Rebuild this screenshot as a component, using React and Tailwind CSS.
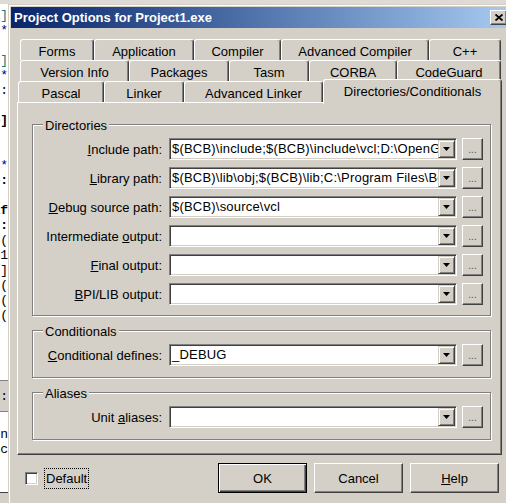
import React from 'react';

const rowOne = [
  { label: 'Forms', w: 'w-[74px]' },
  { label: 'Application', w: 'w-[100px]' },
  { label: 'Compiler', w: 'w-[87px]' },
  { label: 'Advanced Compiler', w: 'w-[148px]' },
  { label: 'C++', w: 'w-[72px]' },
];

const rowTwo = [
  { label: 'Version Info', w: 'w-[109px]' },
  { label: 'Packages', w: 'w-[100px]' },
  { label: 'Tasm', w: 'w-[80px]' },
  { label: 'CORBA', w: 'w-[88px]' },
  { label: 'CodeGuard', w: 'w-[104px]' },
];

const rowThree = [
  { label: 'Pascal', w: 'w-[86px]' },
  { label: 'Linker', w: 'w-[80px]' },
  { label: 'Advanced Linker', w: 'w-[139px]' },
];

// bits of the code editor that peek out from behind the dialog
const code = [
  ['1]', 'text-[#008080]'],
  ['*', 'text-[#000080]'],
  ['', ''],
  ['1]', 'text-[#008080]'],
  ['*', 'text-[#000080]'],
  ['L:', 'text-black'],
  ['', ''],
  ['o]', 'text-black font-bold'],
  ['', ''],
  ['', ''],
  ['*', 'text-[#000080]'],
  ['o:', 'text-black font-bold'],
  ['', ''],
  ['af', 'text-black font-bold'],
  ['e:', 'text-black font-bold'],
  ['L(', 'text-black'],
  ['o1', 'text-black'],
  ['o]', 'text-black'],
  ['L(', 'text-black'],
  ['L(', 'text-black'],
  ['L(', 'text-black'],
];

function Tab({ label, w }) {
  return (
    <div className={`${w} h-[21px] flex items-center justify-center pt-[2px] border-t border-l border-r border-t-white border-l-white border-r-[#404040] rounded-tl-[3px] rounded-tr-[3px] shadow-[inset_-1px_0_0_#808080] bg-[#d4d0c8]`}>
      {label}
    </div>
  );
}

function Arrow() {
  return (
    <svg width="7" height="4" viewBox="0 0 7 4">
      <path d="M0 0H7L3.5 4Z" fill="#000" />
    </svg>
  );
}

function Combo({ value }) {
  return (
    <div className="w-[288px] h-[22px] bg-white border border-t-[#808080] border-l-[#808080] border-b-white border-r-white shadow-[inset_1px_1px_0_#404040,inset_-1px_-1px_0_#d4d0c8] p-[1px] flex">
      <div className="flex-1 overflow-hidden whitespace-nowrap pl-[1px] leading-[18px] tracking-[0.2px]">{value}</div>
      <div className="w-[17px] h-full bg-[#d4d0c8] border border-t-[#d4d0c8] border-l-[#d4d0c8] border-r-[#404040] border-b-[#404040] shadow-[inset_1px_1px_0_#fff,inset_-1px_-1px_0_#808080] flex items-center justify-center">
        <Arrow />
      </div>
    </div>
  );
}

function Dots() {
  return (
    <div className="w-[21px] h-[22px] bg-[#d4d0c8] border border-t-white border-l-white border-r-[#404040] border-b-[#404040] shadow-[inset_-1px_-1px_0_#808080] flex items-end justify-center pb-[4px] text-[10px] leading-[10px] text-[#505050]">
      ...
    </div>
  );
}

function Row({ label, value }) {
  return (
    <div className="flex items-center h-[22px]">
      <div className="w-[129px] text-right whitespace-nowrap">{label}</div>
      <div className="ml-[7px]">
        <Combo value={value} />
      </div>
      <div className="ml-[5px]">
        <Dots />
      </div>
    </div>
  );
}

function Group({ title, children, className = '' }) {
  return (
    <div className={`relative border border-[#808080] shadow-[inset_1px_1px_0_#fff,1px_1px_0_#fff] pt-[13px] ${className}`}>
      <span className="absolute left-[10px] -top-[7px] px-[2px] bg-[#d4d0c8] leading-[15px]">{title}</span>
      {children}
    </div>
  );
}

function Button({ children, isDefault }) {
  const edge = isDefault
    ? 'border border-black shadow-[inset_1px_1px_0_#fff,inset_-1px_-1px_0_#404040,inset_-2px_-2px_0_#808080]'
    : 'border border-t-white border-l-white border-r-[#404040] border-b-[#404040] shadow-[inset_-1px_-1px_0_#808080]';
  return (
    <div className={`w-[89px] h-[30px] flex items-center justify-center bg-[#d4d0c8] ${edge}`}>
      {children}
    </div>
  );
}

export default function App() {
  return (
    <div className="w-[506px] h-[503px] overflow-hidden bg-[#d4d0c8] flex flex-col font-['Liberation_Sans',Arial,sans-serif] text-[13px] leading-[15px] text-black">
      <div className="h-[4px] shrink-0 bg-[#dedbd6]" />
      <div className="flex flex-1 min-h-0">
        {/* editor behind */}
        <div className="w-[8px] shrink-0 bg-white flex flex-col overflow-hidden font-['Liberation_Mono',monospace]">
          <div className="pt-[4px]">
            {code.map(([t, c], i) => (
              <div key={i} className={`h-[15px] flex justify-end whitespace-nowrap ${c}`}>
                {t}
              </div>
            ))}
          </div>
          <div className="h-[57px] shrink-0" />
          <div className="h-[32px] shrink-0 bg-[#d4d0c8] border-t border-b border-[#808080] flex items-center justify-end">:</div>
          <div className="h-[15px] mt-[15px] flex justify-end">n</div>
          <div className="h-[15px] flex justify-end">c</div>
          <div className="flex-1" />
          <div className="h-[11px] shrink-0 bg-[#d4d0c8] border-t border-[#404040]" />
        </div>

        {/* dialog */}
        <div className="w-[503px] h-[520px] shrink-0 bg-[#d4d0c8] border border-t-[#d4d0c8] border-l-[#d4d0c8] border-r-[#404040] border-b-[#404040] shadow-[inset_1px_1px_0_#fff,inset_-1px_-1px_0_#808080] p-[2px]">
          <div className="h-[21px] flex items-center bg-linear-to-r from-[#0a246a] to-[#a6caf0]">
            <span className="pl-[3px] text-white font-bold text-[13px]">Project Options for Project1.exe</span>
            <div className="ml-auto mr-[1px] w-[17px] h-[15px] bg-[#d4d0c8] border border-t-white border-l-white border-r-[#404040] border-b-[#404040] shadow-[inset_-1px_-1px_0_#808080] flex items-center justify-center">
              <svg width="8" height="7" viewBox="0 0 8 7">
                <path d="M0.5 0.5L7.5 6.5M7.5 0.5L0.5 6.5" stroke="#000" strokeWidth="1.8" />
              </svg>
            </div>
          </div>

          <div className="px-[6px] pt-[11px]">
            <div className="flex ml-[3px]">
              {rowOne.map((t) => (
                <Tab key={t.label} {...t} />
              ))}
            </div>
            <div className="flex ml-[3px]">
              {rowTwo.map((t) => (
                <Tab key={t.label} {...t} />
              ))}
            </div>
            <div className="flex items-end h-[21px] ml-[1px]">
              {rowThree.map((t) => (
                <Tab key={t.label} {...t} />
              ))}
              <div className="relative z-10 w-[179px] h-[25px] -mb-[2px] flex items-center justify-center pb-[2px] border-t border-l border-r border-t-white border-l-white border-r-[#404040] rounded-tl-[3px] rounded-tr-[3px] shadow-[inset_-1px_0_0_#808080] bg-[#d4d0c8]">
                Directories/Conditionals
              </div>
            </div>

            <div className="border-t border-l border-r border-b border-t-white border-l-white border-r-[#404040] border-b-[#404040] shadow-[inset_-1px_-1px_0_#808080] pl-[14px] pr-[10px] pt-[21px] pb-[14px]">
              <Group title="Directories" className="pb-[10px]">
                <div className="flex flex-col gap-[7px]">
                  <Row label={<><u>I</u>nclude path:</>} value="$(BCB)\include;$(BCB)\include\vcl;D:\OpenG" />
                  <Row label={<><u>L</u>ibrary path:</>} value="$(BCB)\lib\obj;$(BCB)\lib;C:\Program Files\Bor" />
                  <Row label={<><u>D</u>ebug source path:</>} value="$(BCB)\source\vcl" />
                  <Row label={<>Intermediate <u>o</u>utput:</>} value="" />
                  <Row label={<><u>F</u>inal output:</>} value="" />
                  <Row label={<><u>B</u>PI/LIB output:</>} value="" />
                </div>
              </Group>
              <Group title="Conditionals" className="mt-[14px] pb-[11px]">
                <Row label={<><u>C</u>onditional defines:</>} value="_DEBUG" />
              </Group>
              <Group title="Aliases" className="mt-[14px] pb-[11px]">
                <Row label={<>Unit <u>a</u>liases:</>} value="" />
              </Group>
            </div>

            <div className="mt-[8px] h-[30px] flex items-center">
              <div className="ml-[8px] w-[13px] h-[13px] bg-white border border-t-[#808080] border-l-[#808080] border-b-white border-r-white shadow-[inset_1px_1px_0_#404040,inset_-1px_-1px_0_#d4d0c8]" />
              <div className="ml-[6px] h-[21px] px-[1px] flex items-center border border-dotted border-black">Default</div>
              <div className="ml-auto mr-[3px] flex gap-[7px]">
                <Button isDefault>OK</Button>
                <Button>Cancel</Button>
                <Button>
                  <span>
                    <u>H</u>elp
                  </span>
                </Button>
              </div>
            </div>
          </div>
        </div>
      </div>
    </div>
  );
}
